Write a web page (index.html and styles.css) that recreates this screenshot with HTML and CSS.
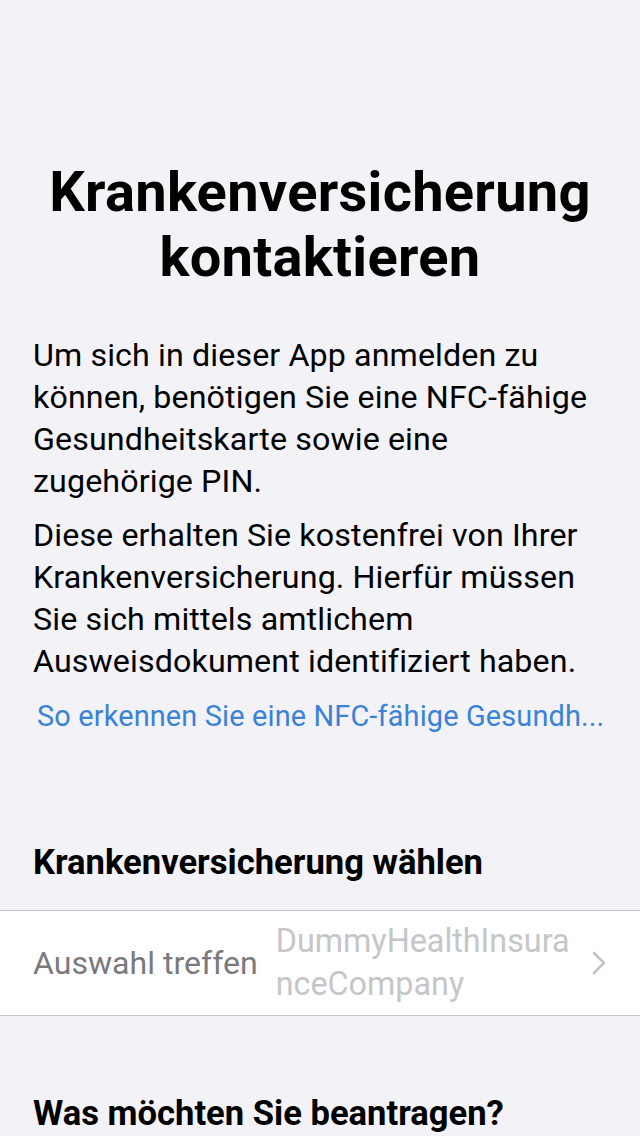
FILE: index.html
```html
<!DOCTYPE html>
<html lang="de">
<head>
<meta charset="utf-8">
<link rel="stylesheet" href="styles.css">
</head>
<body>
<main class="screen">
  <h1 class="title">Krankenversicherung kontaktieren</h1>
  <div class="intro">
    <p class="body">Um sich in dieser App anmelden zu können, benötigen Sie eine NFC-fähige Gesundheitskarte sowie eine zugehörige PIN.</p>
    <p class="body">Diese erhalten Sie kostenfrei von Ihrer Krankenversicherung. Hierfür müssen Sie sich mittels amtlichem Ausweisdokument identifiziert haben.</p>
    <a class="link" href="#">So erkennen Sie eine NFC-fähige Gesundh...</a>
  </div>
  <h2 class="section">Krankenversicherung wählen</h2>
  <div class="row">
    <span class="row-label">Auswahl treffen</span>
    <span class="row-value">DummyHealthInsuranceCompany</span>
    <svg class="chevron" width="14" height="24" viewBox="0 0 14 24"><path d="M2 2 L12 12 L2 22" fill="none" stroke="#c4c4c7" stroke-width="2.6" stroke-linecap="round" stroke-linejoin="round"/></svg>
  </div>
  <h2 class="section section-second">Was möchten Sie beantragen?</h2>
</main>
</body>
</html>
```

FILE: styles.css
```css
html, body {
  margin: 0;
  padding: 0;
  background: #f2f2f7;
}
body {
  font-family: Roboto, "Liberation Sans", sans-serif;
  color: #000;
  width: 640px;
  height: 1136px;
  overflow: hidden;
}
.screen {
  display: flex;
  flex-direction: column;
  padding-top: 160px;
}
.title {
  margin: 0;
  padding: 0 30px;
  text-align: center;
  font-size: 56px;
  font-weight: 700;
  line-height: 65px;
  letter-spacing: 0.3px;
}
.intro {
  display: flex;
  flex-direction: column;
  padding: 44px 33px 0 33px;
}
.body {
  margin: 0 0 12px 0;
  font-size: 32.2px;
  line-height: 42px;
  letter-spacing: 0.12px;
}
.link {
  display: block;
  margin-top: 2px;
  padding-left: 4px;
  color: #3a82d8;
  text-decoration: none;
  font-size: 28.9px;
  line-height: 40px;
  white-space: nowrap;
  letter-spacing: 0.15px;
}
.section {
  margin: 0;
  padding: 106px 33px 28px 33px;
  font-size: 34.6px;
  font-weight: 700;
  line-height: 40px;
}
.section-second {
  padding-top: 77px;
  padding-bottom: 0;
}
.row {
  display: flex;
  align-items: center;
  background: #fff;
  border-top: 1px solid #c8c7cc;
  border-bottom: 1px solid #c8c7cc;
  height: 104px;
  padding: 0 34px 0 33px;
}
.row-label {
  color: #7a7a7e;
  font-size: 32.1px;
  line-height: 42px;
  flex: none;
  margin-right: 18px;
}
.row-value {
  color: #c6c6c8;
  font-size: 32.3px;
  line-height: 43px;
  width: 300px;
  word-break: break-all;
  flex: none;
}
.chevron {
  margin-left: auto;
  flex: none;
}
```
